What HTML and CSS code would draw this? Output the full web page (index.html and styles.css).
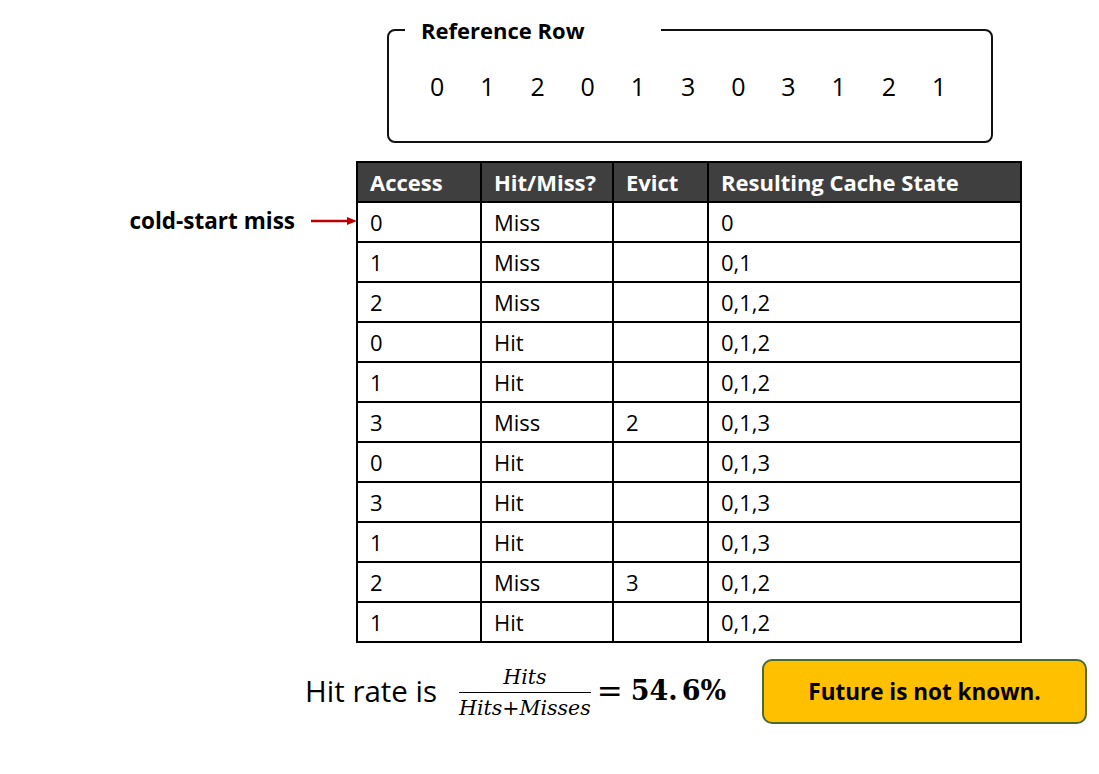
FILE: index.html
```html
<!DOCTYPE html>
<html>
<head>
<meta charset="utf-8">
<link rel="stylesheet" href="styles.css">
</head>
<body>
<div class="page">
  <fieldset class="ref">
    <legend class="ref-title">Reference Row</legend>
    <div class="ref-digits">
      <span>0</span><span>1</span><span>2</span><span>0</span><span>1</span><span>3</span><span>0</span><span>3</span><span>1</span><span>2</span><span>1</span>
    </div>
  </fieldset>

  <div class="middle">
    <div class="annot">
      <div class="annot-row">
        <span class="annot-text">cold-start miss</span>
        <svg class="arrow" width="46" height="10" viewBox="0 0 46 10">
          <line x1="0" y1="5" x2="38" y2="5" stroke="#c00000" stroke-width="2.5"/>
          <polygon points="36,1 46,5 36,9" fill="#c00000"/>
        </svg>
      </div>
    </div>
    <table class="cache">
      <thead>
        <tr><th class="c1">Access</th><th class="c2">Hit/Miss?</th><th class="c3">Evict</th><th class="c4">Resulting Cache State</th></tr>
      </thead>
      <tbody>
        <tr><td>0</td><td>Miss</td><td></td><td>0</td></tr>
        <tr><td>1</td><td>Miss</td><td></td><td>0,1</td></tr>
        <tr><td>2</td><td>Miss</td><td></td><td>0,1,2</td></tr>
        <tr><td>0</td><td>Hit</td><td></td><td>0,1,2</td></tr>
        <tr><td>1</td><td>Hit</td><td></td><td>0,1,2</td></tr>
        <tr><td>3</td><td>Miss</td><td>2</td><td>0,1,3</td></tr>
        <tr><td>0</td><td>Hit</td><td></td><td>0,1,3</td></tr>
        <tr><td>3</td><td>Hit</td><td></td><td>0,1,3</td></tr>
        <tr><td>1</td><td>Hit</td><td></td><td>0,1,3</td></tr>
        <tr><td>2</td><td>Miss</td><td>3</td><td>0,1,2</td></tr>
        <tr><td>1</td><td>Hit</td><td></td><td>0,1,2</td></tr>
      </tbody>
    </table>
  </div>

  <div class="bottom">
    <div class="formula">
      <span class="hr-text">Hit rate is</span>
      <span class="frac">
        <span class="num">Hits</span>
        <span class="den">Hits+Misses</span>
      </span>
      <span class="eq">=</span>
      <span class="val">54.<span class="val-gap">6</span>%</span>
    </div>
    <div class="note">Future is not known.</div>
  </div>
</div>
</body>
</html>
```

FILE: styles.css
```css
html, body {
  margin: 0;
  padding: 0;
  background: #ffffff;
}
body {
  font-family: "Open Sans", "Noto Sans", sans-serif;
  color: #000;
  width: 1099px;
  height: 774px;
  overflow: hidden;
}
.page {
  display: flex;
  flex-direction: column;
}

/* Reference row box */
.ref {
  margin: 15px 0 0 387px;
  width: 606px;
  height: 128px;
  box-sizing: border-box;
  border: 2px solid #111;
  border-radius: 8px;
  padding: 0;
}
.ref-title {
  margin-left: 16px;
  padding: 0 76px 0 16px;
  font-size: 22px;
  font-weight: 700;
  line-height: 30px;
}
.ref-digits {
  display: flex;
  padding: 26px 0 0 41px;
  font-size: 25px;
  line-height: 30px;
}
.ref-digits span {
  width: 50.2px;
}

/* Middle: annotation + table */
.middle {
  display: flex;
  margin-top: 18px;
}
.annot {
  width: 356px;
  padding-top: 40px;
  box-sizing: border-box;
}
.annot-row {
  height: 40px;
  display: flex;
  align-items: center;
  justify-content: flex-end;
  gap: 16px;
}
.annot-text {
  font-size: 22.5px;
  font-weight: 700;
  margin-top: -2px;
}
.arrow {
  display: block;
  margin-right: -1px;
}

.cache {
  border-collapse: collapse;
  border: 2px solid #000;
  font-size: 22px;
}
.cache th, .cache td {
  border: 2px solid #000;
  height: 40px;
  box-sizing: border-box;
  padding: 0 0 0 12px;
  text-align: left;
  line-height: 36px;
}
.cache th {
  background: #3f3f3f;
  color: #fff;
  font-weight: 700;
  border-color: #000;
}
.c1 { width: 124px; }
.c2 { width: 132px; }
.c3 { width: 95px; }
.c4 { width: 313px; }

/* Bottom */
.bottom {
  display: flex;
  align-items: center;
  margin-top: 16px;
}
.formula {
  display: flex;
  align-items: center;
  margin-left: 305px;
  width: 457px;
  padding-top: 2px;
}
.hr-text {
  font-size: 29.5px;
  margin-right: 22px;
  margin-top: -4px;
}
.frac {
  display: inline-flex;
  flex-direction: column;
  align-items: center;
  font-family: "DejaVu Serif", "Liberation Serif", serif;
  font-style: italic;
  font-size: 20.5px;
  line-height: 26px;
}
.num {
  border-bottom: 1.5px solid #000;
  align-self: stretch;
  text-align: center;
  padding-bottom: 2px;
}
.den {
  padding: 2px 0 0 0;
}
.eq {
  font-family: "DejaVu Serif", serif;
  font-size: 31px;
  margin: -4px 8px 0 6px;
}
.val {
  font-family: "DejaVu Serif", "Liberation Serif", serif;
  font-weight: 700;
  font-size: 27px;
  margin-top: -4px;
}
.val-gap {
  margin-left: 4px;
}
.note {
  width: 325px;
  height: 65px;
  box-sizing: border-box;
  background: #ffc000;
  border: 2px solid #4e6b2e;
  border-radius: 10px;
  display: flex;
  align-items: center;
  justify-content: center;
  font-size: 22.5px;
  font-weight: 700;
}
```
